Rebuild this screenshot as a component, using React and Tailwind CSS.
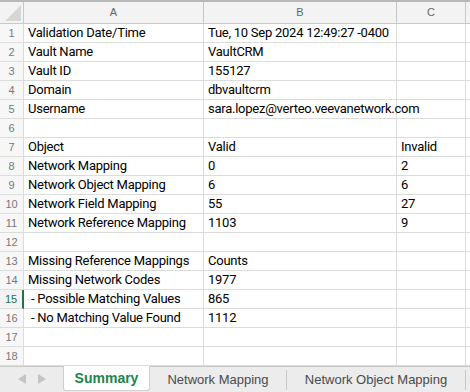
const rows = [
  ["Validation Date/Time", "Tue, 10 Sep 2024 12:49:27 -0400", ""],
  ["Vault Name", "VaultCRM", ""],
  ["Vault ID", "155127", ""],
  ["Domain", "dbvaultcrm", ""],
  ["Username", "sara.lopez@verteo.veevanetwork.com", ""],
  ["", "", ""],
  ["Object", "Valid", "Invalid"],
  ["Network Mapping", "0", "2"],
  ["Network Object Mapping", "6", "6"],
  ["Network Field Mapping", "55", "27"],
  ["Network Reference Mapping", "1103", "9"],
  ["", "", ""],
  ["Missing Reference Mappings", "Counts", ""],
  ["Missing Network Codes", "1977", ""],
  [" - Possible Matching Values", "865", ""],
  [" - No Matching Value Found", "1112", ""],
  ["", "", ""],
  ["", "", ""],
];

const cell = "h-[19px] border-r border-b border-[#dcdcdc] px-[4px] font-['Roboto',Arial,sans-serif] text-[13px] tracking-[-0.25px] leading-[18px] text-black whitespace-pre overflow-visible";

export default function App() {
  return (
    <div className="h-[392px] w-[470px] overflow-hidden bg-white font-['Liberation_Sans',Arial,sans-serif]">
      <div className="h-[2px] bg-[#b8b8b8]" />
      <div className="grid grid-cols-[24px_180px_193px_69px_1fr]">
        <div className="relative h-[22px] border-r border-b border-[#c8c8c8] bg-[#f3f3f3]">
          <svg className="absolute right-[2px] bottom-[2px]" width="16" height="16" viewBox="0 0 16 16">
            <polygon points="16,0 16,16 0,16" fill="#d6d6d6" />
          </svg>
        </div>
        {["A", "B", "C", ""].map((h, i) => (
          <div
            key={i}
            className="flex h-[22px] items-center justify-center border-r border-b border-[#c8c8c8] bg-[#f3f3f3] text-[11px] text-[#666]"
          >
            {h}
          </div>
        ))}

        {rows.map((r, i) => {
          const n = i + 1;
          const active = n === 15;
          return [
            <div
              key={`h${n}`}
              className={`flex h-[19px] items-center justify-center border-r border-b text-[11px] ${
                active
                  ? "border-r-[#217346] border-r-[2px] border-b-[#dcdcdc] bg-[#f3f3f3] text-[#217346]"
                  : "border-[#dcdcdc] bg-[#f7f7f7] text-[#777]"
              }`}
            >
              {n}
            </div>,
            <div key={`a${n}`} className={cell}>
              {r[0]}
            </div>,
            <div key={`b${n}`} className={`${cell} relative z-10`}>
              {r[1]}
            </div>,
            <div key={`c${n}`} className={cell}>
              {r[2]}
            </div>,
            <div key={`d${n}`} className={cell} />,
          ];
        })}
      </div>

      <div className="relative flex h-[28px] items-start border-t border-[#c8c8c8] bg-[#ececec]">
        <div className="flex h-[24px] w-[63px] items-center justify-center gap-[12px]">
          <svg width="8" height="10" viewBox="0 0 8 10">
            <polygon points="8,0 8,10 0,5" fill="#c4c4c4" />
          </svg>
          <svg width="8" height="10" viewBox="0 0 8 10">
            <polygon points="0,0 0,10 8,5" fill="#c4c4c4" />
          </svg>
        </div>
        <div className="-mt-px flex h-[25px] w-[87px] items-center justify-center rounded-b-[3px] border border-t-0 border-[#cfcfcf] bg-white text-[14px] font-bold text-[#1e8449]">
          Summary
        </div>
        <div className="mt-[3px] flex h-[20px] w-[137px] items-center justify-center border-r border-[#c8c8c8] text-[13px] text-[#4a4a4a]">
          Network Mapping
        </div>
        <div className="mt-[3px] flex h-[20px] w-[179px] items-center justify-center border-r border-[#c8c8c8] text-[13px] text-[#4a4a4a]">
          Network Object Mapping
        </div>
        <div className="absolute right-0 bottom-0 left-0 h-[2px] bg-[#c4c4c4]" />
      </div>
    </div>
  );
}
